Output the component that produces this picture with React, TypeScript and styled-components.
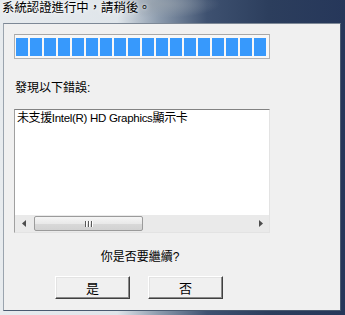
import React from 'react'
import styled, { createGlobalStyle } from 'styled-components'

const GlobalStyle = createGlobalStyle`
  html, body {
    margin: 0;
    padding: 0;
    background: #2b3c58;
  }
  body {
    font-family: "Liberation Sans", "Noto Sans CJK TC", sans-serif;
  }
`

const uiFont = `"Liberation Sans", "Noto Sans CJK TC", sans-serif`

const Window = styled.div`
  width: 345px;
  height: 315px;
  display: flex;
  flex-direction: column;
  box-sizing: border-box;
  background:
    radial-gradient(ellipse 60px 14px at 160px 4px, rgba(150, 160, 170, 0.7), transparent),
    linear-gradient(90deg, #e7ebee 0%, #dfe5ea 34%, #8c9bad 46%, #3e5170 60%, #2c3e5d 78%, #26375a 100%);
`

const TitleBar = styled.div`
  height: 23px;
  flex-shrink: 0;
  display: flex;
  align-items: flex-start;
  padding-left: 2px;
`

const TitleText = styled.span`
  font-family: ${uiFont};
  font-size: 12.4px;
  line-height: 17px;
  color: #000;
  text-shadow: 0 0 6px rgba(255, 255, 255, 0.95), 0 0 3px rgba(255, 255, 255, 0.9);
  white-space: nowrap;
`

const Client = styled.div`
  flex: 1;
  margin: 0 4px 4px 3px;
  background: #f0f0f0;
  border: 1px solid #4a5a70;
  border-left-color: #9aa4ae;
  border-top-color: #7d8896;
  display: flex;
  flex-direction: column;
  padding: 10px 0 0 10px;
`

const Column = styled.div`
  width: 256px;
  display: flex;
  flex-direction: column;
`

const ProgressFrame = styled.div`
  height: 25px;
  box-sizing: border-box;
  border: 1px solid #b2b2b2;
  border-top-color: #a7a7a7;
  background: #f7f7f7;
  padding: 3px 1px 1px 1px;
  display: flex;
  gap: 2px;
`

const Block = styled.div`
  width: 12px;
  height: 18px;
  background: #3799fc;
  flex-shrink: 0;
`

const Label = styled.div`
  font-family: ${uiFont};
  font-size: 12px;
  line-height: 16px;
  color: #000;
  margin-top: 21px;
  padding-left: 1px;
`

const ListBox = styled.div`
  margin-top: 13px;
  height: 124px;
  box-sizing: border-box;
  background: #fff;
  border: 1px solid #e3e3e3;
  border-top-color: #828282;
  border-left-color: #a0a0a0;
  display: flex;
  flex-direction: column;
`

const ListItem = styled.div`
  flex: 1;
  font-family: ${uiFont};
  font-size: 12px;
  line-height: 15px;
  padding: 1px 0 0 2px;
  color: #000;
  white-space: nowrap;
  letter-spacing: -0.4px;
`

const Latin = styled.span`
  font-family: "Liberation Sans Narrow", "Liberation Sans", sans-serif;
  font-size: 11.5px;
  letter-spacing: -0.3px;
`

const ScrollBar = styled.div`
  height: 17px;
  background: #eaeaea;
  display: flex;
  align-items: center;
`

const ArrowButton = styled.div`
  width: 17px;
  height: 17px;
  display: flex;
  align-items: center;
  justify-content: center;
  flex-shrink: 0;
`

const Track = styled.div`
  flex: 1;
  height: 17px;
  display: flex;
  align-items: center;
`

const Thumb = styled.div<{ $width: number }>`
  width: ${p => p.$width}px;
  height: 15px;
  margin-left: 2px;
  box-sizing: border-box;
  border: 1px solid #9b9b9b;
  border-radius: 2px;
  background: linear-gradient(180deg, #f5f5f5 0%, #e9e9e9 50%, #d9d9d9 51%, #d2d2d2 100%);
  display: flex;
  align-items: center;
  justify-content: center;
  gap: 1px;
`

const Grip = styled.div`
  width: 1px;
  height: 6px;
  background: #5a5a5a;
  box-shadow: 1px 0 0 #fff;
  margin-right: 1px;
`

const Question = styled.div`
  font-family: ${uiFont};
  font-size: 12px;
  line-height: 16px;
  text-align: center;
  margin-top: 16px;
  color: #000;
  padding-right: 4px;
`

const ButtonRow = styled.div`
  display: flex;
  justify-content: center;
  gap: 18px;
  margin-top: 11px;
  padding-right: 6px;
`

const Button = styled.button`
  width: 75px;
  height: 23px;
  box-sizing: border-box;
  background: #f0f0f0;
  border: 1px solid;
  border-color: #ffffff #404040 #404040 #ffffff;
  box-shadow: inset -1px -1px 0 #8a8a8a, inset 1px 1px 0 #e3e3e3;
  font-family: ${uiFont};
  font-size: 13px;
  color: #000;
  padding: 0;
  display: flex;
  align-items: center;
  justify-content: center;
`

const Arrow = ({ dir }: { dir: 'left' | 'right' }) => (
  <svg width="4" height="7" viewBox="0 0 4 7">
    {dir === 'left' ? (
      <path d="M4 0 L0 3.5 L4 7 Z" fill="#4d4d4d" />
    ) : (
      <path d="M0 0 L4 3.5 L0 7 Z" fill="#4d4d4d" />
    )}
  </svg>
)

export default function App() {
  const blocks = Array.from({ length: 18 })
  return (
    <>
      <GlobalStyle />
      <Window>
        <TitleBar>
          <TitleText>系統認證進行中，請稍後。</TitleText>
        </TitleBar>
        <Client>
          <Column>
            <ProgressFrame>
              {blocks.map((_, i) => (
                <Block key={i} />
              ))}
            </ProgressFrame>
            <Label>發現以下錯誤:</Label>
            <ListBox>
              <ListItem>
                未支援<Latin>Intel(R) HD Graphics</Latin>顯示卡
              </ListItem>
              <ScrollBar>
                <ArrowButton>
                  <Arrow dir="left" />
                </ArrowButton>
                <Track>
                  <Thumb $width={109}>
                    <Grip />
                    <Grip />
                    <Grip />
                  </Thumb>
                </Track>
                <ArrowButton>
                  <Arrow dir="right" />
                </ArrowButton>
              </ScrollBar>
            </ListBox>
            <Question>你是否要繼續?</Question>
            <ButtonRow>
              <Button>是</Button>
              <Button>否</Button>
            </ButtonRow>
          </Column>
        </Client>
      </Window>
    </>
  )
}
